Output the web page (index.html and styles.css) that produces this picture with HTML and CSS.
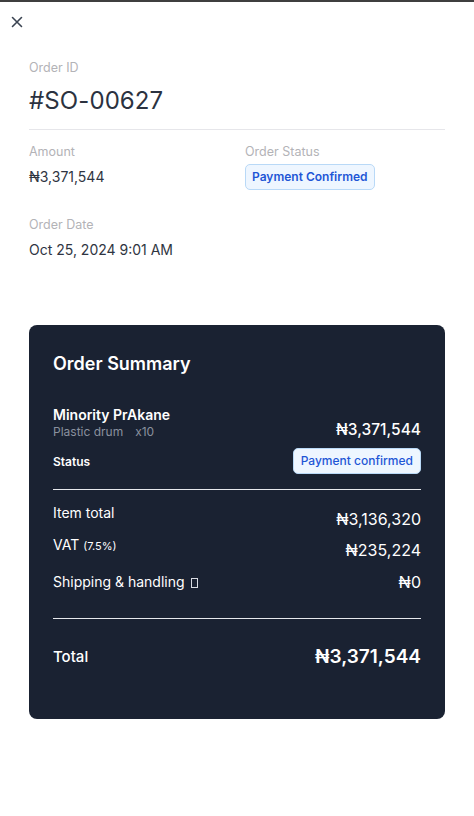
FILE: index.html
```html
<!DOCTYPE html>
<html>
<head>
<meta charset="utf-8">
<link rel="stylesheet" href="styles.css">
</head>
<body>
<div class="page">
  <div class="topbar"></div>
  <button class="close" aria-label="Close">
    <svg width="12" height="12" viewBox="0 0 12 12"><path d="M1.5 1.5L10.5 10.5M10.5 1.5L1.5 10.5" stroke="#3b4452" stroke-width="1.6" stroke-linecap="round"/></svg>
  </button>
  <div class="content">
    <div class="label">Order ID</div>
    <div class="order-id">#SO-00627</div>
    <div class="divider"></div>
    <div class="grid">
      <div class="field">
        <div class="label">Amount</div>
        <div class="value">₦3,371,544</div>
      </div>
      <div class="field">
        <div class="label">Order Status</div>
        <span class="badge">Payment Confirmed</span>
      </div>
      <div class="field">
        <div class="label">Order Date</div>
        <div class="value">Oct 25, 2024 9:01 AM</div>
      </div>
    </div>

    <div class="card">
      <h2 class="card-title">Order Summary</h2>
      <div class="item">
        <div class="item-left">
          <div class="item-name">Minority PrAkane</div>
          <div class="item-sub"><span>Plastic drum</span><span>x10</span></div>
        </div>
        <div class="item-price">₦3,371,544</div>
      </div>
      <div class="status-row">
        <span class="status-label">Status</span>
        <span class="badge small">Payment confirmed</span>
      </div>
      <div class="card-divider"></div>
      <div class="rows">
        <div class="row r1"><span>Item total</span><span class="amt">₦3,136,320</span></div>
        <div class="row r2"><span>VAT <small>(7.5%)</small></span><span class="amt">₦235,224</span></div>
        <div class="row r3"><span>Shipping &amp; handling <span class="box"></span></span><span class="amt">₦0</span></div>
      </div>
      <div class="card-divider second"></div>
      <div class="total"><span>Total</span><span class="total-amt">₦3,371,544</span></div>
    </div>
  </div>
</div>
</body>
</html>
```

FILE: styles.css
```css
* { box-sizing: border-box; }
html, body { margin: 0; padding: 0; background: #fff; }
body { font-family: Inter, "Noto Sans", sans-serif; color: #2d3340; }
.page { width: 474px; min-height: 816px; }
.topbar { height: 2px; background: #3f3f3f; }
.close {
  display: block; margin: 14px 0 0 11px; padding: 0; border: 0; background: none;
  width: 12px; height: 12px; line-height: 0; cursor: pointer;
}
.content { padding: 32px 29px 0 29px; }
.label { font-size: 12.5px; color: #b3b3b7; line-height: 16px; }
.order-id { font-size: 24px; color: #2b3240; margin-top: 10px; line-height: 30px; letter-spacing: 0.1px; }
.divider { height: 1px; background: #e6e6ea; margin-top: 13px; }
.grid {
  display: grid; grid-template-columns: 216px 1fr; row-gap: 27px; margin-top: 14px;
}
.field .value { font-size: 14px; color: #2f3542; margin-top: 8px; line-height: 18px; }
.badge {
  display: inline-block; margin-top: 4px; font-size: 12px; font-weight: 600; color: #1f56d6;
  background: #eef6ff; border: 1px solid #b9d9f7; border-radius: 5px; padding: 4px 6px; line-height: 16px;
}
.card {
  margin-top: 66px; background: #1a2232; border-radius: 8px; padding: 28px 24px 51px 24px; color: #fff;
}
.card-title { margin: 0; font-size: 18px; font-weight: 600; line-height: 22px; }
.item { display: flex; justify-content: space-between; align-items: flex-end; margin-top: 31px; }
.item-name { font-size: 14px; font-weight: 600; line-height: 18px; }
.item-sub { font-size: 12px; color: #8a919e; line-height: 16px; display: flex; gap: 12px; }
.item-price { font-size: 15.5px; font-weight: 500; line-height: 20px; margin-bottom: 0; }
.status-row { display: flex; justify-content: space-between; align-items: center; margin-top: 8px; }
.status-label { font-size: 12px; font-weight: 600; }
.badge.small { margin-top: 0; font-size: 12px; font-weight: 500; padding: 4px 7px; }
.card-divider { height: 1px; background: #e6e8ec; margin-top: 15px; }
.card-divider.second { margin-top: 26px; }
.rows { display: flex; flex-direction: column; margin-top: 14px; gap: 0; }
.row { display: flex; justify-content: space-between; font-size: 14px; line-height: 18px; }
.row .amt { font-size: 16px; line-height: 20px; }
.r1 .amt { margin-top: 5px; }
.r2 { margin-top: 7px; }
.r2 .amt { margin-top: 4px; }
.r2 small { font-size: 11px; }
.r3 { margin-top: 12px; align-items: center; }
.box { display: inline-block; width: 7px; height: 10px; border: 1px solid #d8dbe2; vertical-align: -1px; margin-left: 2px; }
.total { display: flex; justify-content: space-between; align-items: center; margin-top: 26px; }
.total span:first-child { font-size: 15px; font-weight: 500; }
.total-amt { font-size: 19px; font-weight: 600; }
```
